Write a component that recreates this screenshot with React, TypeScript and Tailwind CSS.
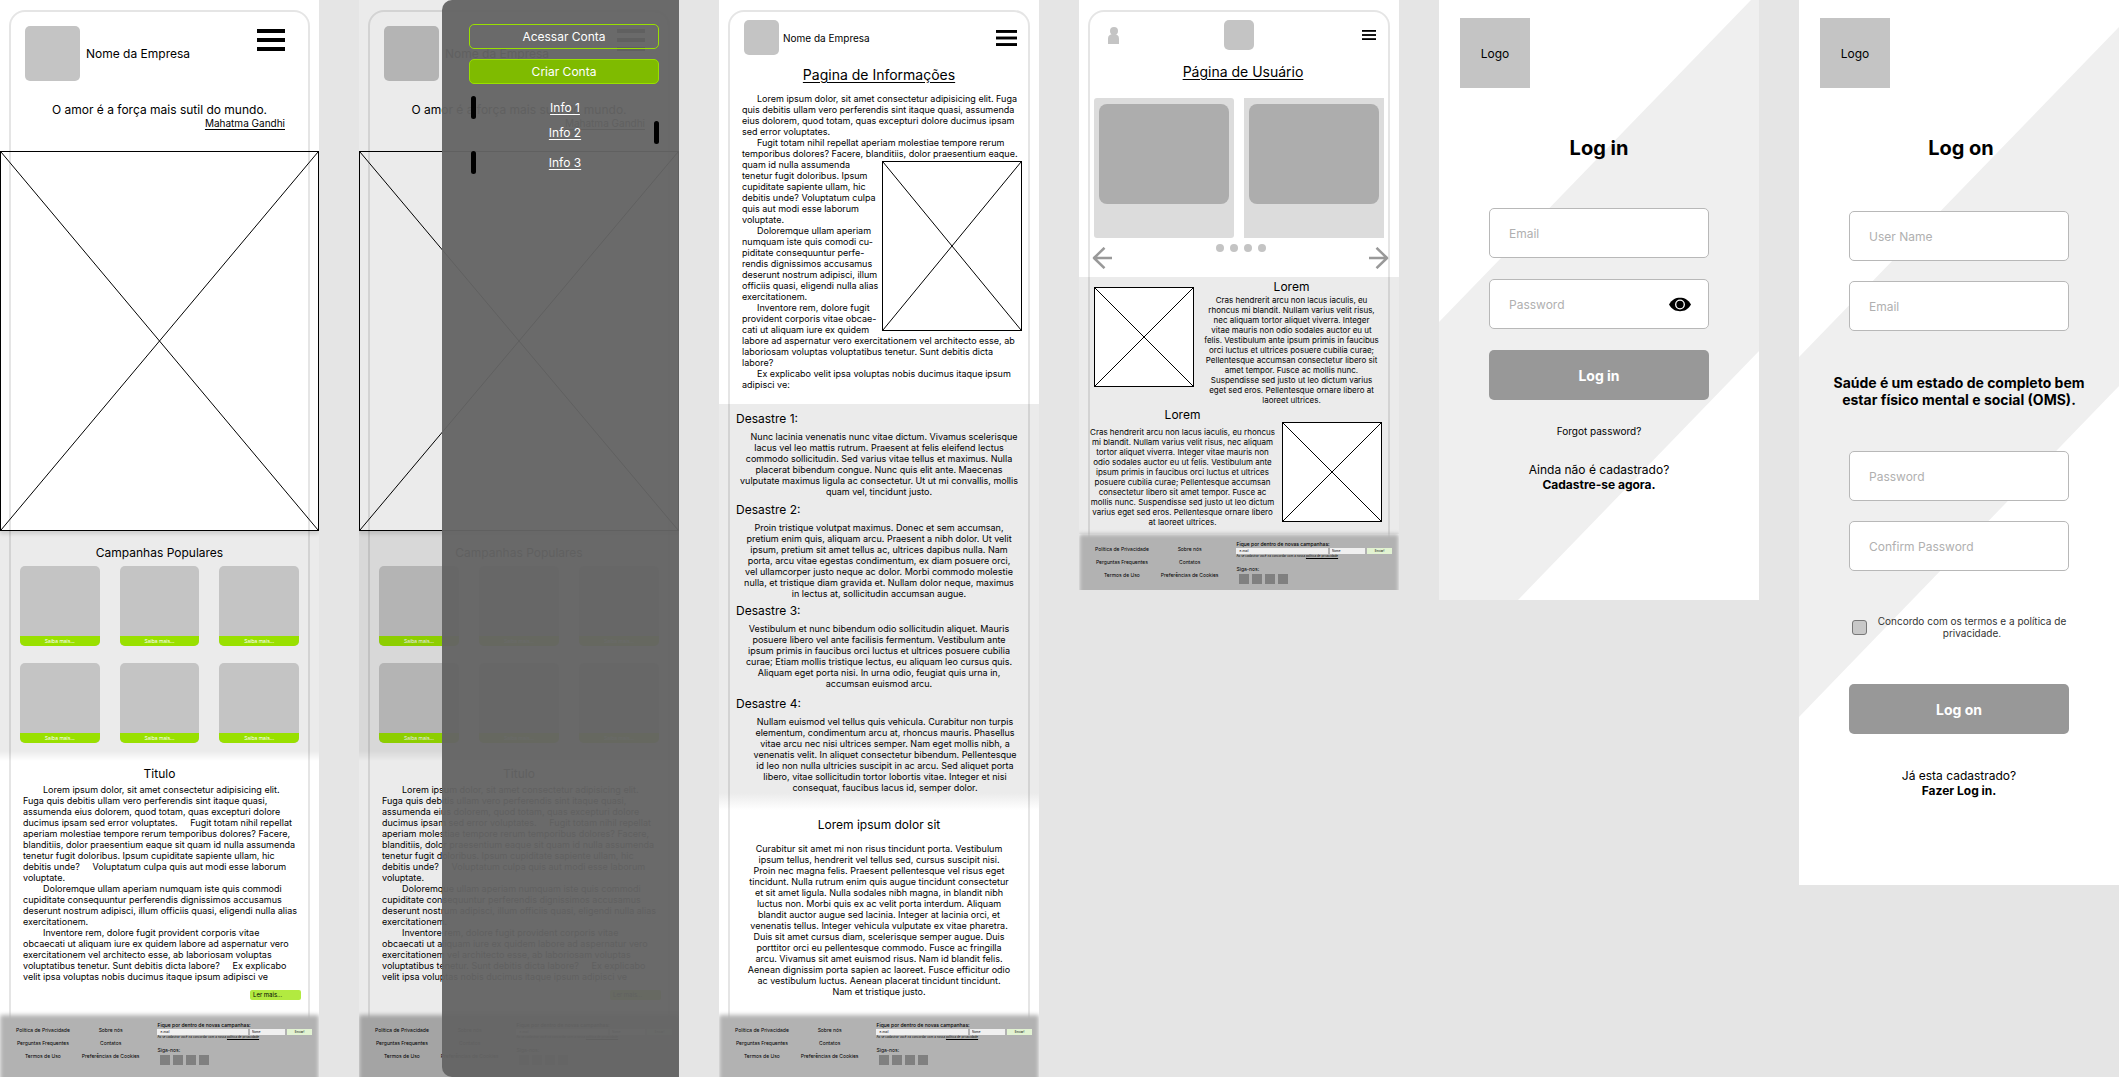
import type { ReactNode } from "react";

const homeParagraphs = [
  `Lorem ipsum dolor, sit amet consectetur adipisicing elit.
Fuga quis debitis ullam vero perferendis sint itaque quasi,
assumenda eius dolorem, quod totam, quas excepturi dolore
ducimus ipsam sed error voluptates.     Fugit totam nihil repellat
aperiam molestiae tempore rerum temporibus dolores? Facere,
blanditiis, dolor praesentium eaque sit quam id nulla assumenda
tenetur fugit doloribus. Ipsum cupiditate sapiente ullam, hic
debitis unde?     Voluptatum culpa quis aut modi esse laborum
voluptate.`,
  `Doloremque ullam aperiam numquam iste quis commodi
cupiditate consequuntur perferendis dignissimos accusamus
deserunt nostrum adipisci, illum officiis quasi, eligendi nulla alias
exercitationem.`,
  `Inventore rem, dolore fugit provident corporis vitae
obcaecati ut aliquam iure ex quidem labore ad aspernatur vero
exercitationem vel architecto esse, ab laboriosam voluptas
voluptatibus tenetur. Sunt debitis dicta labore?     Ex explicabo
velit ipsa voluptas nobis ducimus itaque ipsum adipisci ve`,
];

const disasters = [
  {
    title: "Desastre 1:",
    spacing: "",
    textSpacing: "",
    text: `    Nunc lacinia venenatis nunc vitae dictum. Vivamus scelerisque
lacus vel leo mattis rutrum. Praesent at felis eleifend lectus
commodo sollicitudin. Sed varius vitae tellus et maximus. Nulla
placerat bibendum congue. Nunc quis elit ante. Maecenas
vulputate maximus ligula ac consectetur. Ut ut mi convallis, mollis
quam vel, tincidunt justo.`,
  },
  {
    title: "Desastre 2:",
    spacing: "mt-[5px]",
    textSpacing: "",
    text: `Proin tristique volutpat maximus. Donec et sem accumsan,
pretium enim quis, aliquam arcu. Praesent a nibh dolor. Ut velit
ipsum, pretium sit amet tellus ac, ultrices dapibus nulla. Nam
porta, arcu vitae egestas condimentum, ex diam posuere orci,
vel ullamcorper justo neque ac dolor. Morbi commodo molestie
nulla, et tristique diam gravida et. Nullam dolor neque, maximus
in lectus at, sollicitudin accumsan augue.`,
  },
  {
    title: "Desastre 3:",
    spacing: "mt-1",
    textSpacing: "",
    text: `Vestibulum et nunc bibendum odio sollicitudin aliquet. Mauris
posuere libero vel ante facilisis fermentum. Vestibulum ante
ipsum primis in faucibus orci luctus et ultrices posuere cubilia
curae; Etiam mollis tristique lectus, eu aliquam leo cursus quis.
Aliquam eget porta nisi. In urna odio, feugiat quis urna in,
accumsan euismod arcu.`,
  },
  {
    title: "Desastre 4:",
    spacing: "mt-[7px]",
    textSpacing: "pl-3",
    text: `Nullam euismod vel tellus quis vehicula. Curabitur non turpis
elementum, condimentum arcu at, rhoncus mauris. Phasellus
vitae arcu nec nisi ultrices semper. Nam eget mollis nibh, a
venenatis velit. In aliquet consectetur bibendum. Pellentesque
id leo non nulla ultricies suscipit in ac arcu. Sed aliquet porta
libero, vitae sollicitudin tortor lobortis vitae. Integer et nisi
consequat, faucibus lacus id, semper dolor.`,
  },
];

const closingText = `Curabitur sit amet mi non risus tincidunt porta. Vestibulum
ipsum tellus, hendrerit vel tellus sed, cursus suscipit nisi.
Proin nec magna felis. Praesent pellentesque vel risus eget
tincidunt. Nulla rutrum enim quis augue tincidunt consectetur
et sit amet ligula. Nulla sodales nibh magna, in blandit nibh
luctus non. Morbi quis ex ac velit porta interdum. Aliquam
blandit auctor augue sed lacinia. Integer at lacinia orci, et
venenatis tellus. Integer vehicula vulputate ex vitae pharetra.
Duis sit amet cursus diam, scelerisque semper augue. Duis
porttitor orci eu pellentesque commodo. Fusce ac fringilla
arcu. Vivamus sit amet euismod risus. Nam id blandit felis.
Aenean dignissim porta sapien ac laoreet. Fusce efficitur odio
ac vestibulum luctus. Aenean placerat tincidunt tincidunt.
Nam et tristique justo.`;

const userTextNarrow = `Cras hendrerit arcu non lacus iaculis, eu
rhoncus mi blandit. Nullam varius velit risus,
nec aliquam tortor aliquet viverra. Integer
vitae mauris non odio sodales auctor eu ut
felis. Vestibulum ante ipsum primis in faucibus
orci luctus et ultrices posuere cubilia curae;
Pellentesque accumsan consectetur libero sit
amet tempor. Fusce ac mollis nunc.
Suspendisse sed justo ut leo dictum varius
eget sed eros. Pellentesque ornare libero at
laoreet ultrices.`;

const userTextWide = `Cras hendrerit arcu non lacus iaculis, eu rhoncus
mi blandit. Nullam varius velit risus, nec aliquam
tortor aliquet viverra. Integer vitae mauris non
odio sodales auctor eu ut felis. Vestibulum ante
ipsum primis in faucibus orci luctus et ultrices
posuere cubilia curae; Pellentesque accumsan
consectetur libero sit amet tempor. Fusce ac
mollis nunc. Suspendisse sed justo ut leo dictum
varius eget sed eros. Pellentesque ornare libero
at laoreet ultrices.`;

function Screen({ framed = false, children }: { framed?: boolean; children: ReactNode }) {
  return (
    <section className="relative isolate flex flex-col overflow-hidden bg-white">
      {children}
      {framed && (
        <div className="pointer-events-none absolute inset-x-[9px] top-[10px] -bottom-8 z-10 rounded-[16px] border-2 border-black/10" />
      )}
    </section>
  );
}

function Placeholder({ className }: { className: string }) {
  return (
    <div className={`border border-black bg-white ${className}`}>
      <svg className="block size-full" viewBox="0 0 100 100" preserveAspectRatio="none" aria-hidden="true">
        <path d="M0 0L100 100M100 0L0 100" stroke="#000" vectorEffect="non-scaling-stroke" fill="none" />
      </svg>
    </div>
  );
}

function MenuButton({ className, bar }: { className: string; bar: number }) {
  return (
    <button type="button" aria-label="Menu" className={className}>
      <svg className="block size-full" viewBox="0 0 28 22" preserveAspectRatio="none" aria-hidden="true">
        <rect width="28" height={bar} y="0" />
        <rect width="28" height={bar} y={11 - bar / 2} />
        <rect width="28" height={bar} y={22 - bar} />
      </svg>
    </button>
  );
}

function FooterLinks({ items }: { items: string[] }) {
  return (
    <ul className="flex flex-col items-center gap-[7px] pt-3">
      {items.map((item) => (
        <li key={item} className="flex">
          <a href="#" className="text-[5px] leading-[6px] whitespace-nowrap text-black">{item}</a>
        </li>
      ))}
    </ul>
  );
}

function Footer({ className }: { className: string }) {
  return (
    <footer className={`relative z-20 flex ${className}`}>
      <div className="absolute inset-x-0 top-0 -bottom-4 bg-[#b2b2b2] blur-[2px]" />
      <nav className="relative flex gap-3 pl-4" aria-label="Rodapé">
        <FooterLinks items={["Política de Privacidade", "Perguntas Frequentes", "Termos de Uso"]} />
        <FooterLinks items={["Sobre nós", "Contatos", "Preferências de Cookies"]} />
      </nav>
      <div className="relative ml-[18px] flex flex-1 flex-col pt-[7px] pr-[7px]">
        <h3 className="text-[5px] leading-[6px] font-medium whitespace-nowrap">Fique por dentro de novas campanhas:</h3>
        <form className="mt-px flex h-[6px] gap-0.5" onSubmit={(e) => e.preventDefault()}>
          <input aria-label="e-mail" placeholder="e-mail" className="h-[6px] min-w-0 flex-1 bg-[#f0f0f0] px-[3px] text-[3px] leading-[4px] placeholder:text-black" />
          <input aria-label="Nome" placeholder="Nome" className="h-[6px] w-[35px] bg-[#f0f0f0] px-0.5 text-[3px] leading-[4px] placeholder:text-black" />
          <button type="submit" className="h-[6px] w-[25px] bg-[#e2f3d2] text-[3px] leading-[4px]">Enviar!</button>
        </form>
        <p className="text-[3px] leading-[5px] whitespace-nowrap">
          Ao se cadastrar você irá concordar com a nossa <a href="#" className="underline">política de privacidade</a>
        </p>
        <p className="mt-[7px] text-[5px] leading-[6px]">Siga-nos:</p>
        <div className="mt-0.5 flex gap-[3px] pl-[3px]">
          {["Rede 1", "Rede 2", "Rede 3", "Rede 4"].map((name) => (
            <a key={name} href="#" aria-label={name} className="size-[10px] bg-[#808080]" />
          ))}
        </div>
      </div>
    </footer>
  );
}

function HomeContent() {
  return (
    <>
      <header className="flex items-center pt-[26px] pr-[34px] pl-[25px]">
        <div className="size-[55px] rounded-[5px] bg-[#c4c4c4]" />
        <span className="ml-1.5 text-[12px] leading-[15px]">Nome da Empresa</span>
        <MenuButton className="mt-[3px] ml-auto h-[22px] w-7 self-start" bar={4} />
      </header>
      <blockquote className="mt-[21px] flex flex-col">
        <p className="text-center text-[12px] leading-[15px]">O amor é a força mais sutil do mundo.</p>
        <cite className="pr-[34px] text-right text-[10px] leading-[12px] not-italic underline underline-offset-2">Mahatma Gandhi</cite>
      </blockquote>
      <Placeholder className="relative mt-[22px] h-[380px] shadow-[0_3px_4px_rgba(0,0,0,0.12)]" />
      <div className="bg-[linear-gradient(to_bottom,#ebebeb_calc(100%-10px),transparent)] px-5 pt-[14px] pb-[18px]">
        <h2 className="text-center text-[12px] leading-[15px]">Campanhas Populares</h2>
        <div className="mt-1.5 grid grid-cols-3 gap-x-5 gap-y-[17px]">
          {[1, 2, 3, 4, 5, 6].map((n) => (
            <article key={n} className="flex h-20 flex-col justify-end overflow-hidden rounded-[5px] bg-[#c4c4c4]">
              <a href="#" className="bg-[#99e000] text-center text-[5px] leading-[10px] text-white">Saiba mais...</a>
            </article>
          ))}
        </div>
      </div>
      <h2 className="mt-[5px] text-center text-[12px] leading-[15px]">Titulo</h2>
      <div className="mt-[3px] pl-[23px] text-[9px] leading-[11px] whitespace-pre">
        {homeParagraphs.map((text) => (
          <p key={text} className="indent-5">{text}</p>
        ))}
      </div>
      <button type="button" className="mt-2 mr-[18px] h-[10px] w-[51px] self-end rounded-[2px] bg-[#b2ea40] pl-[3px] text-left text-[6px] leading-[10px]">
        Ler mais...
      </button>
      <Footer className="mt-[15px] pb-3" />
    </>
  );
}

function Drawer() {
  const links = [
    { label: "Info 1", row: "mt-3" },
    { label: "Info 2", row: "mt-0.5 flex-row-reverse" },
    { label: "Info 3", row: "mt-[7px]" },
  ];
  return (
    <div className="absolute inset-0 z-30 flex justify-end bg-black/8">
      <nav className="flex w-[237px] flex-col rounded-l-[10px] bg-[#646464]/96 pt-6 pr-5 pl-[27px] text-[12px] leading-[15px] text-white" aria-label="Menu">
        <button type="button" className="h-[25px] rounded-[5px] border border-[#99e000]">Acessar Conta</button>
        <button type="button" className="mt-[10px] h-[25px] rounded-[5px] border border-[#99e000] bg-[#7fbb00]">Criar Conta</button>
        {links.map((link) => (
          <div key={link.label} className={`flex h-[23px] items-center justify-between pl-0.5 ${link.row}`}>
            <span className="h-[23px] w-[5px] rounded-[3px] bg-black" />
            <a href="#" className="underline underline-offset-2">{link.label}</a>
            <span className="w-[5px]" />
          </div>
        ))}
      </nav>
    </div>
  );
}

function InfoScreen() {
  return (
    <Screen framed>
      <header className="flex items-center pt-5 pr-[22px] pl-[25px]">
        <div className="size-[35px] rounded-[5px] bg-[#c4c4c4]" />
        <span className="ml-1 text-[10px] leading-[12px]">Nome da Empresa</span>
        <MenuButton className="ml-auto h-[16px] w-[21px]" bar={4} />
      </header>
      <h1 className="mt-[11px] text-center text-[14px] leading-[17px] underline underline-offset-2">Pagina de Informações</h1>
      <div className="mt-[10px] pl-[23px] text-[9px] leading-[11px] whitespace-pre">
        <p className="indent-[15px]">{`Lorem ipsum dolor, sit amet consectetur adipisicing elit. Fuga
quis debitis ullam vero perferendis sint itaque quasi, assumenda
eius dolorem, quod totam, quas excepturi dolore ducimus ipsam
sed error voluptates.`}</p>
        <p className="indent-[15px]">{`Fugit totam nihil repellat aperiam molestiae tempore rerum
temporibus dolores? Facere, blanditiis, dolor praesentium eaque.`}</p>
        <div className="flex justify-between pr-[17px]">
          <div>
            <p>{`quam id nulla assumenda
tenetur fugit doloribus. Ipsum
cupiditate sapiente ullam, hic
debitis unde? Voluptatum culpa
quis aut modi esse laborum
voluptate.`}</p>
            <p className="indent-[15px]">{`Doloremque ullam aperiam
numquam iste quis comodi cu-
piditate consequuntur perfe-
rendis dignissimos accusamus
deserunt nostrum adipisci, illum
officiis quasi, eligendi nulla alias
exercitationem.`}</p>
            <p className="indent-[15px]">{`Inventore rem, dolore fugit
provident corporis vitae obcae-
cati ut aliquam iure ex quidem`}</p>
          </div>
          <Placeholder className="mt-0.5 h-[170px] w-[140px]" />
        </div>
        <p>{`labore ad aspernatur vero exercitationem vel architecto esse, ab
laboriosam voluptas voluptatibus tenetur. Sunt debitis dicta
labore?`}</p>
        <p className="indent-[15px]">{`Ex explicabo velit ipsa voluptas nobis ducimus itaque ipsum
adipisci ve:`}</p>
      </div>
      <div className="mt-[14px] bg-[linear-gradient(to_bottom,#ebebeb_calc(100%-17px),transparent)] pt-[7px] pb-[17px]">
        {disasters.map((item) => (
          <article key={item.title} className={item.spacing}>
            <h2 className="pl-[17px] text-[12px] leading-[15px]">{item.title}</h2>
            <p className={`mt-[5px] text-center text-[9px] leading-[11px] whitespace-pre ${item.textSpacing}`}>{item.text}</p>
          </article>
        ))}
      </div>
      <h2 className="mt-[7px] text-center text-[12px] leading-[15px]">Lorem ipsum dolor sit</h2>
      <p className="mt-[11px] text-center text-[9px] leading-[11px] whitespace-pre">{closingText}</p>
      <Footer className="mt-[18px] pb-3" />
    </Screen>
  );
}

function Arrow({ flip = false, label }: { flip?: boolean; label: string }) {
  return (
    <button type="button" aria-label={label} className={flip ? "mt-[3px] rotate-180" : "mt-[3px]"}>
      <svg className="block" width="20" height="22" viewBox="0 0 20 22" fill="none" stroke="#999" strokeWidth="2.5" strokeLinejoin="round" aria-hidden="true">
        <path d="M12.5 0.8L2 11L12.5 21.2M2 11H20" />
      </svg>
    </button>
  );
}

function UserScreen() {
  return (
    <Screen framed>
      <header className="grid grid-cols-[1fr_auto_1fr] items-center px-[23px] pt-5">
        <a href="#" aria-label="Perfil" className="ml-1.5 w-[11px]">
          <svg className="block" width="11" height="17" viewBox="0 0 11 17" fill="#c4c4c4" aria-hidden="true">
            <circle cx="6" cy="4" r="4" />
            <path d="M0 17V11.5C0 8.500 2 7 5.500 7S11 8.500 11 11.500V17Z" />
          </svg>
        </a>
        <div className="size-[30px] rounded-[5px] bg-[#c4c4c4]" />
        <MenuButton className="h-[10px] w-[14px] justify-self-end" bar={4} />
      </header>
      <h1 className="mt-[13px] pl-2 text-center text-[14px] leading-[17px]">
        <span className="underline underline-offset-2">Página de Usuário</span>
      </h1>
      <div className="mt-[18px] grid grid-cols-2 gap-[10px] px-[15px]">
        <div className="h-[140px] rounded-[3px] bg-[#dcdcdc] px-[5px] pt-1.5">
          <div className="h-[100px] rounded-[8px] bg-[#adadad]" />
        </div>
        <div className="h-[140px] bg-[#dcdcdc] px-[5px] pt-1.5">
          <div className="h-[100px] rounded-[8px] bg-[#adadad]" />
        </div>
      </div>
      <div className="mt-1.5 flex items-start justify-between pr-[10px] pb-2 pl-[13px]">
        <Arrow label="Anterior" />
        <div className="flex gap-1.5">
          {[1, 2, 3, 4].map((n) => (
            <button key={n} type="button" aria-label={`Página ${n}`} className="size-2 rounded-full bg-[#c4c4c4]" />
          ))}
        </div>
        <Arrow label="Próximo" flip />
      </div>
      <div className="bg-[#ebebeb] pt-0.5 pb-[7px]">
        <article className="flex pr-[10px] pl-[15px]">
          <Placeholder className="mt-2 size-[100px]" />
          <div className="flex-1 text-center">
            <h2 className="text-[12px] leading-[15px]">Lorem</h2>
            <p className="mt-px text-[8px] leading-[10px] whitespace-pre">{userTextNarrow}</p>
          </div>
        </article>
        <article className="mt-0.5 flex pr-[17px] pl-1">
          <div className="flex-1 text-center">
            <h2 className="text-[12px] leading-[15px]">Lorem</h2>
            <p className="mt-[5px] text-[8px] leading-[10px] whitespace-pre">{userTextWide}</p>
          </div>
          <Placeholder className="mt-[15px] size-[100px]" />
        </article>
      </div>
      <Footer className="pb-1.5" />
    </Screen>
  );
}

function Band({ viewBox, d }: { viewBox: string; d: string }) {
  return (
    <svg className="absolute inset-0 -z-10 size-full" viewBox={viewBox} preserveAspectRatio="none" aria-hidden="true">
      <path d={d} fill="#efefef" />
    </svg>
  );
}

function LogoBox() {
  return (
    <div className="mt-[18px] ml-[21px] flex size-[70px] items-center justify-center bg-[#c4c4c4] text-[12px] leading-[15px]">Logo</div>
  );
}

function Field({ label, type = "text", className = "" }: { label: string; type?: string; className?: string }) {
  return (
    <input
      type={type}
      aria-label={label}
      placeholder={label}
      className={`h-[50px] w-full rounded-[5px] border border-[#b8b8b8] bg-white px-[19px] text-[12px] leading-[15px] placeholder:text-[#b0b0b0] ${className}`}
    />
  );
}

function LoginScreen() {
  return (
    <Screen>
      <Band viewBox="0 0 320 600" d="M312 0H320V351L79 600H0V322Z" />
      <LogoBox />
      <h1 className="mt-12 text-center text-[20px] leading-[24px] font-bold">Log in</h1>
      <form className="mt-12 flex flex-col gap-[21px] px-[50px]" onSubmit={(e) => e.preventDefault()}>
        <Field label="Email" type="email" />
        <div className="relative">
          <Field label="Password" type="password" className="block pr-12" />
          <button type="button" aria-label="Mostrar senha" className="absolute top-[18px] right-[18px]">
            <svg className="block" width="22" height="15" viewBox="0 0 22 15" aria-hidden="true">
              <path d="M0 7.500C3 2.500 6.500 0.800 11 0.800S19 2.500 22 7.500C19 12.500 15.500 14.200 11 14.200S3 12.500 0 7.500Z" />
              <circle cx="11" cy="7.500" r="4.300" fill="none" stroke="#fff" strokeWidth="1.300" />
            </svg>
          </button>
        </div>
        <button type="submit" className="h-[50px] rounded-[5px] bg-[#989898] text-[14px] leading-[17px] font-bold text-white">Log in</button>
      </form>
      <a href="#" className="mt-[25px] text-center text-[10px] leading-[12px]">Forgot password?</a>
      <p className="mt-[25px] pb-[108px] text-center text-[12px] leading-[15px]">
        Ainda não é cadastrado?
        <br />
        <a href="#" className="font-bold">Cadastre-se agora.</a>
      </p>
    </Screen>
  );
}

function SignupScreen() {
  return (
    <Screen>
      <Band viewBox="0 0 320 885" d="M0 357L320 27V386L0 717Z" />
      <LogoBox />
      <h1 className="mt-12 pl-1 text-center text-[20px] leading-[24px] font-bold">Log on</h1>
      <form className="mt-[51px] flex flex-col px-[50px]" onSubmit={(e) => e.preventDefault()}>
        <Field label="User Name" />
        <Field label="Email" type="email" className="mt-5" />
        <p className="-mx-8 mt-[43px] text-center text-[14px] leading-[17px] font-bold">
          Saúde é um estado de completo bem
          <br />
          estar físico mental e social (OMS).
        </p>
        <Field label="Password" type="password" className="mt-[43px]" />
        <Field label="Confirm Password" type="password" className="mt-5" />
        <label className="mt-11 flex items-center pl-[3px]">
          <input type="checkbox" className="size-[15px] shrink-0 appearance-none rounded-[3px] border border-[#777] bg-[#c8c8c8]" />
          <span className="flex-1 pl-2 text-center text-[10px] leading-[12px] whitespace-pre text-[#333]">{`Concordo com os termos e a política de
privacidade.`}</span>
        </label>
        <button type="submit" className="mt-[45px] h-[50px] rounded-[5px] bg-[#989898] text-[14px] leading-[17px] font-bold text-white">Log on</button>
      </form>
      <p className="mt-[34px] pb-[87px] text-center text-[12px] leading-[15px]">
        Já esta cadastrado?
        <br />
        <a href="#" className="font-bold">Fazer Log in.</a>
      </p>
    </Screen>
  );
}

export default function App() {
  return (
    <main className="grid min-h-screen grid-cols-[319fr_repeat(5,320fr)] items-start gap-10 bg-[#e5e5e5] font-['Inter',sans-serif] text-black">
      <Screen framed>
        <HomeContent />
      </Screen>
      <Screen framed>
        <HomeContent />
        <Drawer />
      </Screen>
      <InfoScreen />
      <UserScreen />
      <LoginScreen />
      <SignupScreen />
    </main>
  );
}
